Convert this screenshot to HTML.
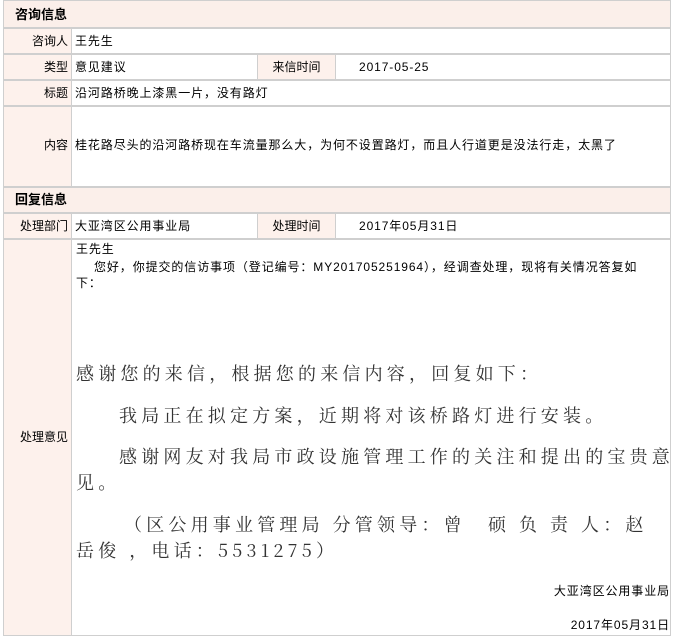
<!DOCTYPE html>
<html><head><meta charset="utf-8"><style>
body{margin:0;width:674px;height:640px;background:#fff;position:relative;font-family:"Liberation Sans","Noto Sans CJK SC",sans-serif;font-size:12px;color:#000;overflow:hidden;letter-spacing:0.9px}
.c{position:absolute;box-sizing:border-box;border:1px solid #cfcfcf;margin:-1px 0 0 -1px}
.l{background:#fdf1ec;text-align:right;padding-right:3px;letter-spacing:0}
.h{background:#fbefea;font-weight:bold;font-size:13px;padding-left:11px;letter-spacing:0}
.v{padding-left:3px}
.t{position:absolute;white-space:nowrap}
.s{font-family:"Noto Serif CJK SC","Liberation Serif",serif;font-size:18px;color:#333;letter-spacing:4.2px}
</style></head><body>
<div class="c h" style="left:4px;top:1px;width:668px;height:28px;line-height:27px">咨询信息</div>
<div class="c l" style="left:4px;top:29px;width:69px;height:26px;line-height:24px">咨询人</div>
<div class="c v" style="left:72px;top:29px;width:600px;height:26px;line-height:24px">王先生</div>
<div class="c l" style="left:4px;top:55px;width:69px;height:26px;line-height:24px">类型</div>
<div class="c v" style="left:72px;top:55px;width:187px;height:26px;line-height:24px">意见建议</div>
<div class="c" style="left:258px;top:55px;width:79px;height:26px;line-height:24px;background:#fdf1ec;text-align:center;letter-spacing:0">来信时间</div>
<div class="c v" style="left:336px;top:55px;width:336px;height:26px;line-height:24px;padding-left:23px">2017-05-25</div>
<div class="c l" style="left:4px;top:81px;width:69px;height:26px;line-height:24px">标题</div>
<div class="c v" style="left:72px;top:81px;width:600px;height:26px;line-height:24px">沿河路桥晚上漆黑一片，没有路灯</div>
<div class="c l" style="left:4px;top:107px;width:69px;height:81px;line-height:76px">内容</div>
<div class="c v" style="left:72px;top:107px;width:600px;height:81px;line-height:76px">桂花路尽头的沿河路桥现在车流量那么大，为何不设置路灯，而且人行道更是没法行走，太黑了</div>
<div class="c h" style="left:4px;top:188px;width:668px;height:26px;line-height:24px">回复信息</div>
<div class="c l" style="left:4px;top:214px;width:69px;height:26px;line-height:24px">处理部门</div>
<div class="c v" style="left:72px;top:214px;width:187px;height:26px;line-height:24px">大亚湾区公用事业局</div>
<div class="c" style="left:258px;top:214px;width:79px;height:26px;line-height:24px;background:#fdf1ec;text-align:center;letter-spacing:0">处理时间</div>
<div class="c v" style="left:336px;top:214px;width:336px;height:26px;line-height:24px;padding-left:23px">2017年05月31日</div>
<div class="c l" style="left:4px;top:240px;width:69px;height:397px;line-height:394px">处理意见</div>
<div class="c" style="left:72px;top:240px;width:600px;height:397px"></div>
<div class="t" style="left:76px;top:240px">王先生</div>
<div class="t" style="left:94px;top:258px">您好，你提交的信访事项（登记编号：MY201705251964），经调查处理，现将有关情况答复如</div>
<div class="t" style="left:76px;top:274px">下：</div>
<div class="t s" style="left:76px;top:360px">感谢您的来信，根据您的来信内容，回复如下：</div>
<div class="t s" style="left:119px;top:402px">我局正在拟定方案，近期将对该桥路灯进行安装。</div>
<div class="t s" style="left:119px;top:443px">感谢网友对我局市政设施管理工作的关注和提出的宝贵意</div>
<div class="t s" style="left:76px;top:469px">见。</div>
<div class="t s" style="left:124px;top:511px">（区公用事业管理局 分管领导：曾　硕 负 责 人：赵</div>
<div class="t s" style="left:76px;top:537px">岳俊 ，电话：5531275）</div>
<div class="t" style="right:4px;top:582px">大亚湾区公用事业局</div>
<div class="t" style="right:4px;top:616px">2017年05月31日</div>
</body></html>
